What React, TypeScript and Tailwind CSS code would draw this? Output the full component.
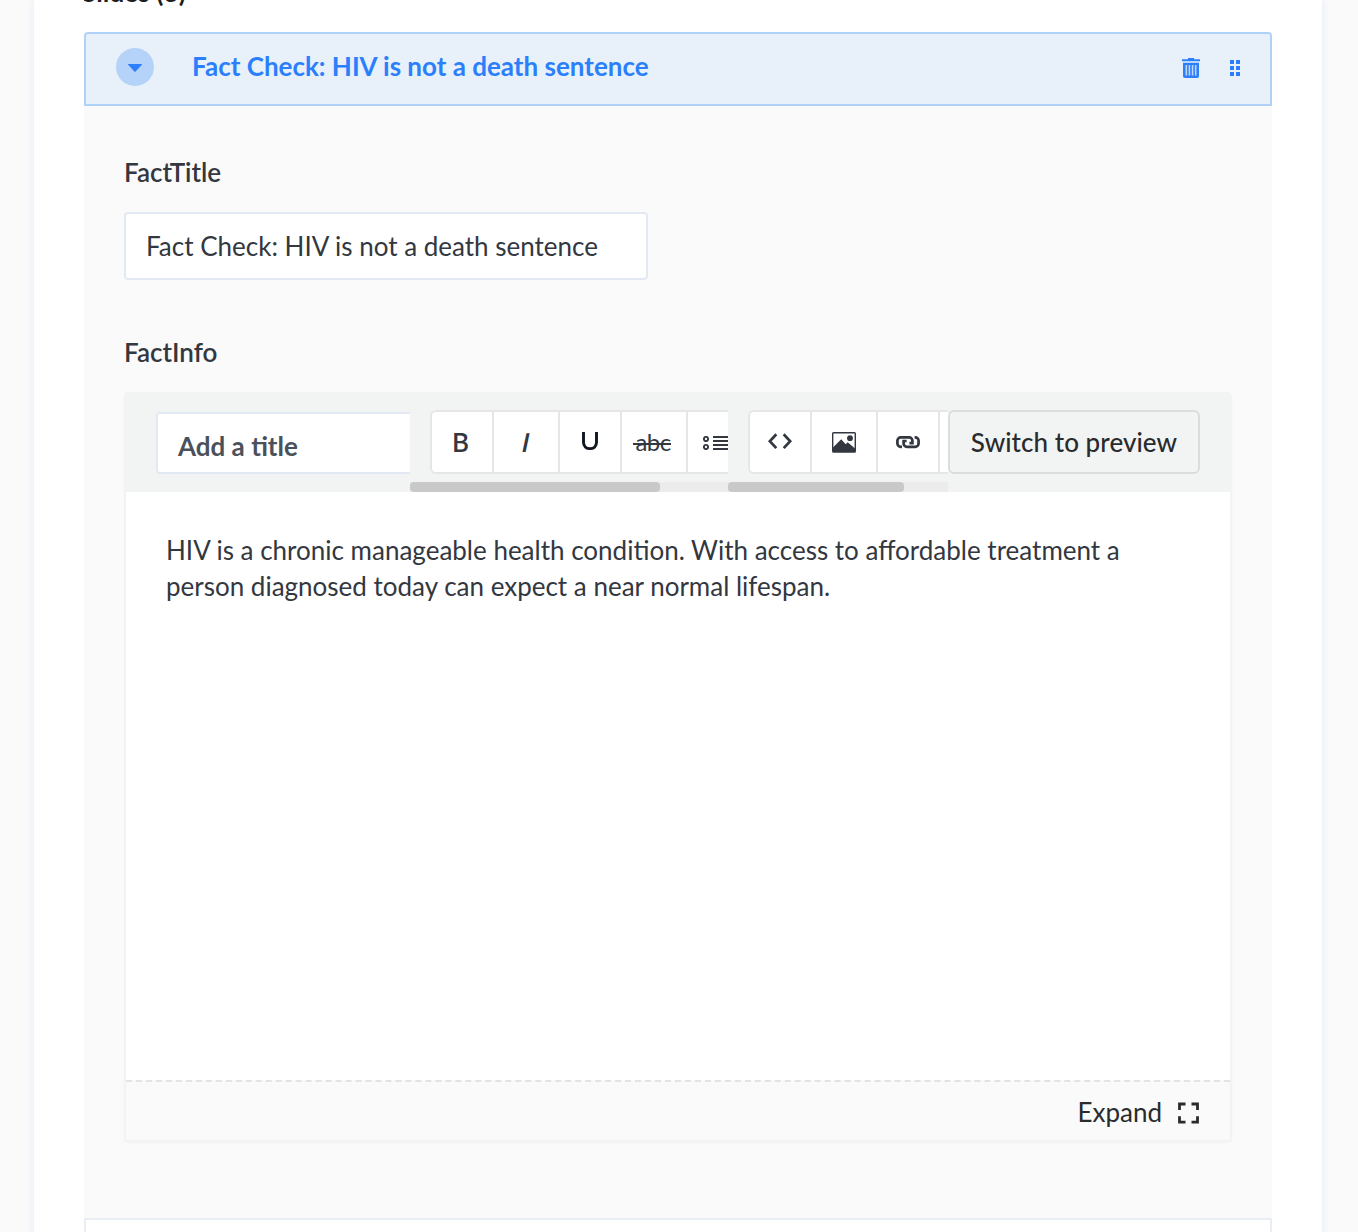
import type { ReactNode } from "react";

function TrashIcon() {
  return (
    <svg width="18" height="20" viewBox="0 0 18 20" className="shrink-0">
      <path d="M6 0h6v1.2h6v2H0v-2h6z" fill="#2b7ffb" />
      <path d="M1 4.8h16v13.2a2 2 0 0 1-2 2H3a2 2 0 0 1-2-2z" fill="#2b7ffb" />
      <path d="M4.3 7v10.6M7.4 7v10.6M10.6 7v10.6M13.7 7v10.6" stroke="#bcd6f9" strokeWidth="1.6" />
    </svg>
  );
}

function GripIcon() {
  return (
    <svg width="10" height="16" viewBox="0 0 10 16" className="shrink-0" fill="#2b7ffb">
      <path d="M0 0h4v4H0zM6 0h4v4H6zM0 6h4v4H0zM6 6h4v4H6zM0 12h4v4H0zM6 12h4v4H6z" />
    </svg>
  );
}

function ToolButton({ children, className }: { children: ReactNode; className: string }) {
  return (
    <button
      type="button"
      className={
        "flex h-16 shrink-0 justify-center border-y-2 border-l-2 border-[#e6e6e6] bg-white text-[26px] leading-9 text-[#333740] " +
        className
      }
    >
      {children}
    </button>
  );
}

function ScrollBar({ thumb }: { thumb: string }) {
  return (
    <div className="mt-2 h-2.5 w-full bg-[#ececec]">
      <div className={"h-2.5 rounded bg-[#c9c9c9] " + thumb} />
    </div>
  );
}

function Toolbar() {
  return (
    <div className="flex h-[100px] rounded-t-[4px] bg-[#f2f4f4] pl-8">
      <div className="w-[254px] shrink-0 overflow-hidden pt-5">
        <div className="h-[62px] w-[300px] rounded-[4px] border-2 border-[#e3e9f3] bg-white pt-[14px] pl-5 text-[26px] leading-9 font-bold text-[#4b515a]">
          Add a title
        </div>
      </div>
      <div className="w-[318px] shrink-0 overflow-hidden pt-[18px]">
        <div className="flex pl-5">
          <ToolButton className="w-[62px] rounded-l-[6px] pt-[12px] pr-[3px] font-semibold">B</ToolButton>
          <ToolButton className="w-[66px] pt-[12px] pr-[2px] font-semibold">
            <span className="inline-block -skew-x-12">I</span>
          </ToolButton>
          <ToolButton className="w-[62px] pt-5">
            <svg width="16" height="18" viewBox="0 0 16 18" fill="none" stroke="#101622" strokeWidth="2.9">
              <path d="M1.5 0v10.2c0 3.9 2.5 6.4 6.5 6.4s6.5-2.5 6.5-6.4V0" />
            </svg>
          </ToolButton>
          <ToolButton className="w-[66px] pt-[12px] pr-[2px]">
            <span className="relative h-9 text-[24px] tracking-[-0.6px]">
              abc
              <span className="absolute top-[19px] -left-[2px] h-[2px] w-[38px] bg-[#333740]" />
            </span>
          </ToolButton>
          <ToolButton className="w-[66px] pt-6 pr-[2px]">
            <svg width="32" height="14" viewBox="0 0 32 14" fill="none" stroke="#333740" strokeWidth="2">
              <circle cx="3" cy="3" r="2.1" strokeWidth="1.9" />
              <circle cx="3" cy="11" r="2.1" strokeWidth="1.9" />
              <path d="M10 1h20M10 5h20M10 9h20M10 13h20" />
            </svg>
          </ToolButton>
        </div>
        <ScrollBar thumb="w-[250px]" />
      </div>
      <div className="w-[220px] shrink-0 overflow-hidden pt-[18px]">
        <div className="flex pl-5">
          <ToolButton className="w-[62px] rounded-l-[6px] pt-[21px]">
            <svg width="24" height="17" viewBox="0 0 24 17" fill="none" stroke="#333740" strokeWidth="2.7">
              <path d="M8.3 1.3L1.8 8.2l6.5 6.9M15.7 1.3l6.5 6.9-6.5 6.9" />
            </svg>
          </ToolButton>
          <ToolButton className="w-[66px] pt-5">
            <svg width="24" height="21" viewBox="0 0 24 21">
              <rect x="0.7" y="0.7" width="22.6" height="19.3" rx="0.8" fill="none" stroke="#333740" strokeWidth="1.4" />
              <circle cx="18" cy="6.2" r="2.9" fill="#333740" />
              <path d="M1 20v-4.6l8.2-8.2 4.5 5 2-1.9 7.3 6.2V20z" fill="#333740" />
            </svg>
          </ToolButton>
          <ToolButton className="w-[62px] pt-6">
            <svg width="24" height="13" viewBox="0 0 24 13" fill="none" stroke="#333740" strokeWidth="2.7">
              <path d="M6 10.8H4.8a3.4 3.4 0 0 1-3.4-3.4V4.8a3.4 3.4 0 0 1 3.4-3.4h8.4A3.2 3.2 0 0 1 16.4 4.6v2.6h-3" />
              <path d="M18.6 1.4h.6a3.4 3.4 0 0 1 3.4 3.4v2.6a3.4 3.4 0 0 1-3.4 3.4h-8.4a3.2 3.2 0 0 1-3.2-3.2V5h3" />
            </svg>
          </ToolButton>
          <ToolButton className="w-[66px]">{null}</ToolButton>
        </div>
        <ScrollBar thumb="w-[176px]" />
      </div>
      <button
        type="button"
        className="mt-[18px] flex h-16 w-[252px] shrink-0 justify-center rounded-[6px] border-2 border-[#dadddc] pt-[12px] text-[26px] leading-9 font-medium tracking-[0.06px] whitespace-nowrap text-[#292b2c]"
      >
        Switch to preview
      </button>
    </div>
  );
}

function Editor() {
  return (
    <div className="mt-[22px] h-[750px] rounded-[4px] shadow-[0_1px_2px_#f2f4f4]">
      <Toolbar />
      <div className="h-[650px] border-x-2 border-b-2 border-[#f2f4f4]">
        <div className="h-[588px] bg-white px-10 pt-10 text-[26px] leading-9 text-[#333740]">
          HIV is a chronic manageable health condition. With access to affordable treatment a person diagnosed
          today can expect a near normal lifespan.
        </div>
        <div className="flex h-[60px] justify-end border-t-2 border-dashed border-[#e3e3e3] pt-[12px] pr-[31px] text-[26px] leading-9 text-[#292b2c]">
          Expand
          <svg width="21" height="22" viewBox="0 0 21 22" className="mt-2 ml-4" fill="none" stroke="#292b2c" strokeWidth="2.8">
            <path d="M1.5 8V2h6M13.5 2h6v6M19.5 14.3v5.9h-6M7.5 20.2h-6v-5.9" />
          </svg>
        </div>
      </div>
    </div>
  );
}

export default function App() {
  return (
    <div className="h-[1232px] w-[1358px] overflow-hidden bg-[#fafafa] font-['Lato',sans-serif]">
      <main className="ml-[34px] h-[1240px] w-[1288px] bg-white px-[50px] shadow-[0_0_8px_#e3e9f8]">
        <div className="h-8 overflow-hidden">
          <h2 className="-mt-[26px] -ml-[2px] text-[26px] leading-9 font-bold tracking-[0.1px] text-[#1c1d1f]">Slides (3)</h2>
        </div>
        <header className="flex h-[74px] rounded-t-[4px] border-2 border-[#b1d2f8] bg-[#e8f0fa] pl-[30px]">
          <span className="mt-[14px] flex size-[38px] items-center justify-center rounded-full bg-[#b5d3f8]">
            <svg width="14" height="8" viewBox="0 0 14 8" className="mt-[2px]" fill="#2b7ffb">
              <path d="M0.5 0h13a.5.5 0 0 1 .4.8L7.6 7.6a.8.8 0 0 1-1.2 0L.1.8A.5.5 0 0 1 .5 0z" />
            </svg>
          </span>
          <span className="mt-[14px] ml-[38px] flex-1 text-[26px] leading-9 font-bold text-[#2b7ffb]">
            Fact Check: HIV is not a death sentence
          </span>
          <span className="flex h-[68px] items-center gap-[30px] pr-[30px]">
            <TrashIcon />
            <GripIcon />
          </span>
        </header>
        <section className="h-[1112px] bg-[#fafafa] px-10 pt-12 text-[#333740]">
          <div className="text-[26px] leading-9 font-semibold">FactTitle</div>
          <div className="mt-[22px] h-[68px] w-[524px] rounded-[4px] border-2 border-[#e3e9f3] bg-white pt-[14px] pl-5 text-[26px] leading-9">
            Fact Check: HIV is not a death sentence
          </div>
          <div className="mt-[54px] text-[26px] leading-9 font-semibold">FactInfo</div>
          <Editor />
        </section>
        <div className="h-[74px] border-2 border-[#e9edf4] bg-white" />
      </main>
    </div>
  );
}
